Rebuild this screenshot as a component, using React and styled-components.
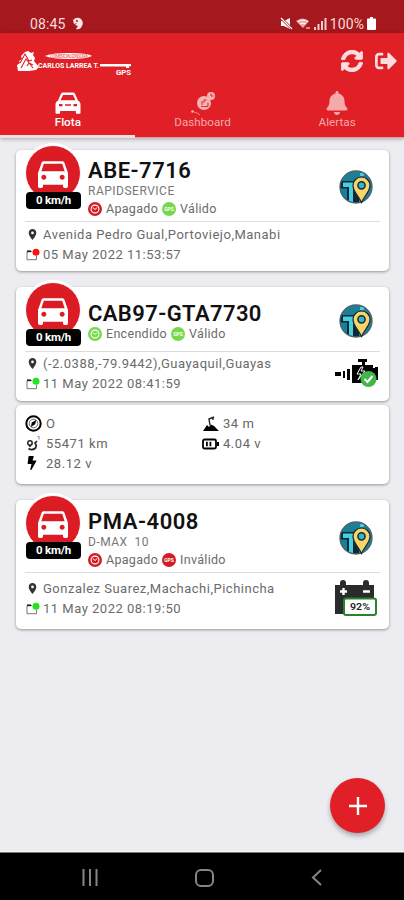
import React from "react";
import styled, { createGlobalStyle } from "styled-components";
import { MdDirectionsCar, MdLocationOn } from "react-icons/md";
import { FaSyncAlt, FaSignOutAlt, FaBell, FaBolt } from "react-icons/fa";

const GlobalStyle = createGlobalStyle`
  * {
    box-sizing: border-box;
  }
  body {
    margin: 0;
    background: #ededf1;
    font-family: Roboto, "Noto Sans", sans-serif;
  }
  svg {
    display: block;
    flex: none;
  }
`;

const Screen = styled.div`
  width: 404px;
  height: 900px;
  display: flex;
  flex-direction: column;
  overflow: hidden;
  background: #ededf1;
`;

const StatusBar = styled.div`
  flex: none;
  height: 33px;
  padding: 14px 28px 0 30px;
  display: flex;
  justify-content: space-between;
  background: #a5181d;
  color: #f9dcdc;
  font-size: 14px;
  line-height: 20px;
`;

const StatusGroup = styled.div`
  display: flex;
  align-items: center;
  gap: ${(props) => props.$gap}px;
  letter-spacing: 0.1px;
`;

const Header = styled.header`
  flex: none;
  height: 105px;
  display: flex;
  flex-direction: column;
  background: #e01f26;
  box-shadow: 0 1px 4px rgba(0, 0, 0, 0.3);
`;

const Toolbar = styled.div`
  height: 55px;
  padding: 0 7px 0 15px;
  display: flex;
  align-items: center;
  justify-content: space-between;
`;

const Actions = styled.div`
  display: flex;
  align-items: center;
  gap: 12px;
  color: #fcdcdc;
`;

const Tabs = styled.nav`
  flex: 1;
  display: grid;
  grid-template-columns: repeat(3, 1fr);
`;

const Tab = styled.div`
  display: flex;
  flex-direction: column;
  align-items: center;
  padding: 2px 0 0 1px;
  color: ${(props) => (props.$active ? "#fff" : "#f5a9ab")};
  border-bottom: ${(props) => (props.$active ? "3px solid #f3dede" : "1px solid #e99da0")};
  font-size: 11.7px;
  font-weight: ${(props) => (props.$active ? 500 : 400)};
  line-height: 13px;
`;

const TabIcon = styled.div`
  height: 26px;
  display: flex;
  align-items: center;
`;

const List = styled.main`
  flex: 1;
  padding: 12px 15px 0 16px;
  display: flex;
  flex-direction: column;
`;

const Card = styled.section`
  height: ${(props) => props.$height}px;
  margin-bottom: ${(props) => props.$gap}px;
  border-radius: 5px;
  background: #fff;
  box-shadow: 0 1px 3px rgba(0, 0, 0, 0.38);
`;

const Summary = styled.div`
  height: ${(props) => props.$height}px;
  margin: 0 9px;
  border-bottom: 1px solid #dcdcdc;
  display: grid;
  grid-template-columns: 55px 1fr 42px;
  column-gap: 8px;
`;

const Avatar = styled.div`
  display: flex;
  flex-direction: column;
  align-items: center;
  margin-top: -5px;
`;

const AvatarCircle = styled.div`
  flex: none;
  width: 56px;
  height: 56px;
  display: flex;
  align-items: center;
  justify-content: center;
  border-radius: 50%;
  background: #dc1c24;
  border: 1px solid #fff;
  box-shadow: 0 0 0 2px #fff;
  color: #fff;
`;

const Speed = styled.div`
  flex: none;
  width: 55px;
  height: 17px;
  margin: -9px 0 0 2px;
  border-radius: 4px;
  background: #000;
  color: #fff;
  font-size: 11.5px;
  font-weight: 700;
  letter-spacing: -0.2px;
  line-height: 17px;
  text-align: center;
  z-index: 1;
`;

const Identity = styled.div`
  padding-top: ${(props) => props.$top}px;
  white-space: nowrap;
`;

const Plate = styled.h2`
  margin: 0;
  height: 23px;
  font-size: 22px;
  font-weight: 600;
  line-height: 24px;
  letter-spacing: ${(props) => props.$spacing}px;
  color: #111;
`;

const Alias = styled.div`
  height: 18px;
  padding-top: 1px;
  font-size: 12px;
  line-height: 17px;
  letter-spacing: 0.5px;
  color: #777;
  white-space: pre;
`;

const States = styled.div`
  display: flex;
  align-items: center;
  gap: 4px;
  height: 17px;
  font-size: 12.5px;
  letter-spacing: 0.3px;
  color: #6b6b6b;
`;

const MapButton = styled.div`
  padding: ${(props) => props.$top}px 0 0 1px;
`;

const Details = styled.div`
  margin: 0 10px;
  display: flex;
  justify-content: space-between;
`;

const Lines = styled.div`
  padding-top: ${(props) => props.$top}px;
`;

const Line = styled.div`
  height: 20.5px;
  display: grid;
  grid-template-columns: 17px auto;
  align-items: center;
  font-size: 13px;
  letter-spacing: 0.5px;
  white-space: nowrap;
  color: #6b6b6b;
`;

const Extra = styled.div`
  padding-top: ${(props) => props.$top}px;
`;

const Sensors = styled(Card)`
  padding: 9px 9px 0;
  display: grid;
  grid-template-columns: 177px 1fr;
  grid-auto-rows: 19.7px;
`;

const Sensor = styled.div`
  display: grid;
  grid-template-columns: 18px auto;
  column-gap: 3px;
  justify-content: start;
  align-items: center;
  font-size: 13px;
  letter-spacing: 0.55px;
  color: #666;
`;

const AddButton = styled.button`
  position: absolute;
  left: 330px;
  top: 778px;
  width: 55px;
  height: 55px;
  padding: 0;
  display: flex;
  align-items: center;
  justify-content: center;
  border: none;
  border-radius: 50%;
  background: #e01f26;
  box-shadow: 0 3px 5px rgba(0, 0, 0, 0.3);
`;

const NavBar = styled.footer`
  flex: none;
  height: 48px;
  padding: 2px 81px 0 80px;
  border-top: 1px solid #777;
  box-shadow: 0 -1px 0 #fafafa;
  display: flex;
  align-items: center;
  justify-content: space-between;
  background: #000;
`;

const Logo = () => (
  <svg width="120" height="34" viewBox="0 0 120 34" fill="#fff">
    <path d="M3 27 2 21l3-2-1-2 3-2-1-3 4-4 3-1 3 2 3-1-1 3 2 3-1 3 5 6-3 3-7 1Z" />
    <g fill="none" stroke="#e01f26" strokeWidth="1.100">
      <path d="m5 19 5-9 4 7 3-1M6 24l5-9 7 9M12 22l2-3 4 2" />
    </g>
    <path d="M30 12q5-3 24-3t23 3q-5 3-23 3t-24-3Z" />
    <text x="35" y="13.800" fontSize="5" fontWeight="700" fill="#e88" textLength="38">
      COMERCIALIZADORA
    </text>
    <text x="23" y="23.500" fontSize="7.4" fontWeight="700" textLength="61" lengthAdjust="spacingAndGlyphs">
      CARLOS LARREA T.
    </text>
    <path d="M85 20h31v2.200h-2v1.800h-3v-1.500H85Z" />
    <text x="101" y="31" fontSize="7" fontWeight="700" textLength="15" lengthAdjust="spacingAndGlyphs">
      GPS
    </text>
  </svg>
);

const FrontCar = () => (
  <svg width="26" height="22" viewBox="0 0 26 22">
    <path
      fill="#fff"
      fillRule="evenodd"
      d="M6 1.800Q6.600.5 8 .5h10q1.400 0 2 1.300L23 8.500q2.500 1 2.500 3.500v9q0 .8-.8.8h-3q-.8 0-.8-.8v-2H5.100v2q0 .8-.8.8h-3q-.8 0-.8-.8v-9Q.5 9.500 3 8.500ZM8 3 5.500 8.300h15L18 3ZM4 12v2.200h3.500V12Zm14.500 0v2.200H22V12ZM10 12.200v1.500h6v-1.500Z"
    />
  </svg>
);

const DashboardGlyph = () => (
  <svg width="26" height="26" viewBox="0 0 26 26">
    <circle cx="15" cy="13" r="7" fill="#f5b4b5" />
    <circle cx="22" cy="6" r="4" fill="#f5b4b5" />
    <g stroke="#e01f26" fill="none">
      <path d="M22 3.500V6h2.500M12 16.500h2.500M13 15v-4M15 13v-3h2.500M15 16.500h4v-4" />
    </g>
    <circle cx="3.500" cy="21.500" r="1.300" fill="#f5b4b5" />
    <path d="m5 22 3 1 3 2" stroke="#ee8587" fill="none" />
  </svg>
);

const MapPin = () => (
  <svg width="34" height="34" viewBox="0 0 34 34">
    <defs>
      <clipPath id="disc">
        <circle cx="17" cy="17" r="16" />
      </clipPath>
    </defs>
    <g clipPath="url(#disc)">
      <path fill="#1b7f96" d="M0 0h34v34H0z" />
      <path fill="#102735" d="M0 11h16v23H0zM13 15h7v19h-7z" />
      <path fill="#44d0df" d="M4 12.500h10V33h-4V17H4zM21 3h4v3h-4z" />
      <path fill="#138199" d="M1 18.500h7V33H1z" />
    </g>
    <circle cx="17" cy="17" r="16" fill="none" stroke="#51616b" strokeWidth="1.300" />
    <path
      d="M22.500 32.500C19.500 25.500 14 21.500 14 15.500a8.500 8.500 0 0 1 17 0C31 21.500 25.500 25.500 22.500 32.500Z"
      fill="#fad469"
      stroke="#122b37"
      strokeWidth="1.200"
    />
    <circle cx="22.500" cy="15.300" r="3.600" fill="#35b7ca" stroke="#122b37" strokeWidth="1.500" />
  </svg>
);

const PowerBadge = ({ color }) => (
  <svg width="14" height="14" viewBox="0 0 14 14">
    <circle cx="7" cy="7" r="7" fill={color} />
    <circle cx="7" cy="7" r="3.900" fill="none" stroke="#fff" strokeWidth="1.100" />
    <path d="M4.800 5.500 7 7.500l2.200-2" fill="none" stroke="#fff" />
  </svg>
);

const GpsBadge = ({ color }) => (
  <svg width="14" height="14" viewBox="0 0 14 14">
    <circle cx="7" cy="7" r="7" fill={color} />
    <text x="7" y="9" fontSize="5" fontWeight="700" fill="#fff" textAnchor="middle" letterSpacing="0">
      GPS
    </text>
  </svg>
);

const CalendarDot = ({ color }) => (
  <svg width="14" height="14" viewBox="0 0 14 14">
    <path d="M6 3.500H1v8.200h9.500V8" fill="none" stroke="#777" />
    <path d="M1 3.300h4" stroke="#222" strokeWidth="1.800" />
    <circle cx="10" cy="4.200" r="3.500" fill={color} />
  </svg>
);

const Engine = () => (
  <svg width="44" height="28" viewBox="0 0 44 28">
    <path d="M0 13h6v4H0zM8 12h2v7H8zM12 10h3v11h-3zM17 6h10V3h-4V0h9v3h-2v3h8v3h2V8h3v13h-4l-4 3H17z" />
    <path d="m26 8-4 7h4l-3 6 7-9h-4l2-4Z" fill="none" stroke="#fff" />
    <circle cx="33.500" cy="20" r="8" fill="#42b649" />
    <path d="m29.500 20 3 3 5-6" fill="none" stroke="#fff" strokeWidth="2" />
  </svg>
);

const CarBattery = () => (
  <svg width="44" height="37" viewBox="0 0 44 37">
    <path d="M0 5h5V3q0-3 3-3t3 3v2h17V3q0-3 3-3t3 3v2h5v29H0Z" fill="#292b2d" />
    <path d="M5 11.500h7M8.500 8v7M28 11.500h7" stroke="#fff" strokeWidth="2.400" />
    <rect x="9" y="18.500" width="32" height="16.500" rx="2" fill="#fff" stroke="#25852a" strokeWidth="2" />
    <text
      x="15"
      y="30"
      fontSize="9"
      fontWeight="600"
      fill="#222"
      textLength="20"
      lengthAdjust="spacingAndGlyphs"
    >
      92%
    </text>
  </svg>
);

const GaugeIcon = () => (
  <svg width="17" height="17" viewBox="0 0 17 17">
    <circle cx="8.500" cy="8.500" r="7.200" fill="none" stroke="#000" strokeWidth="2" />
    <circle cx="8.500" cy="8.500" r="4.300" fill="none" stroke="#444" strokeWidth=".8" />
    <path d="m11.300 5-4.600 2.500-.8 4.500 4.300-2.700Z" />
  </svg>
);

const OdometerIcon = () => (
  <svg width="17" height="17" viewBox="0 0 17 17" fill="none" stroke="#222">
    <circle cx="5" cy="8" r="2.200" strokeWidth="1.500" />
    <path d="M5 10v2m-1.500 1.500Q7 16 10.500 13q1.500-3-.5-5l2-2" strokeWidth="1.700" />
    <path d="M12.500 1.500h1.500v3" strokeWidth=".9" stroke="#777" />
  </svg>
);

const AltitudeIcon = () => (
  <svg width="17" height="17" viewBox="0 0 17 17">
    <path d="m1 16 4-6 2 2 2-2.500 3 1.500 5 5Z" />
    <path d="M8 10.500 7 4l5-2M11 2.500v2.500" stroke="#222" fill="none" strokeWidth="1.400" />
  </svg>
);

const CellIcon = () => (
  <svg width="17" height="12" viewBox="0 0 17 12">
    <rect x="1" y="1.500" width="13" height="9" rx="1.500" fill="none" stroke="#000" strokeWidth="1.800" />
    <path d="M15 4h2v4h-2zM4 3.800h1.800v4.500H4zM7.500 3.800h1.800v4.500H7.500z" />
  </svg>
);

const vehicles = [
  {
    plate: "ABE-7716",
    spacing: 0.5,
    alias: "RAPIDSERVICE",
    engineOn: false,
    gpsOk: true,
    address: "Avenida Pedro Gual,Portoviejo,Manabi",
    date: "05 May 2022 11:53:57",
    dot: "#f81414",
    layout: { height: 121, gap: 16, summary: 72, title: 9, map: 20, lines: 2 },
  },
  {
    plate: "CAB97-GTA7730",
    spacing: 0.4,
    engineOn: true,
    gpsOk: true,
    address: "(-2.0388,-79.9442),Guayaquil,Guayas",
    date: "11 May 2022 08:41:59",
    dot: "#20e51b",
    extra: <Engine />,
    extraTop: 7,
    layout: { height: 114, gap: 4, summary: 65, title: 15, map: 17, lines: 1 },
    sensors: true,
  },
  {
    plate: "PMA-4008",
    spacing: 0.55,
    alias: "D-MAX  10",
    engineOn: false,
    gpsOk: false,
    address: "Gonzalez Suarez,Machachi,Pichincha",
    date: "11 May 2022 08:19:50",
    dot: "#20e51b",
    extra: <CarBattery />,
    extraTop: 7,
    layout: { height: 129, gap: 0, summary: 73, title: 10, map: 21, lines: 5 },
  },
];

const GREEN = "#78d84b";
const RED = "#d31c25";

const VehicleCard = ({ vehicle }) => {
  const { layout } = vehicle;
  return (
    <Card $height={layout.height} $gap={layout.gap}>
      <Summary $height={layout.summary}>
        <Avatar>
          <AvatarCircle>
            <MdDirectionsCar size={40} />
          </AvatarCircle>
          <Speed>0 km/h</Speed>
        </Avatar>
        <Identity $top={layout.title}>
          <Plate $spacing={vehicle.spacing}>{vehicle.plate}</Plate>
          {vehicle.alias ? <Alias>{vehicle.alias}</Alias> : null}
          <States>
            <PowerBadge color={vehicle.engineOn ? GREEN : RED} />
            <span>{vehicle.engineOn ? "Encendido" : "Apagado"}</span>
            <GpsBadge color={vehicle.gpsOk ? GREEN : RED} />
            <span>{vehicle.gpsOk ? "Válido" : "Inválido"}</span>
          </States>
        </Identity>
        <MapButton $top={layout.map}>
          <MapPin />
        </MapButton>
      </Summary>
      <Details>
        <Lines $top={layout.lines}>
          <Line>
            <MdLocationOn size={13} color="#333" />
            {vehicle.address}
          </Line>
          <Line>
            <CalendarDot color={vehicle.dot} />
            {vehicle.date}
          </Line>
        </Lines>
        {vehicle.extra ? <Extra $top={vehicle.extraTop}>{vehicle.extra}</Extra> : null}
      </Details>
    </Card>
  );
};

const App = () => (
  <Screen>
    <GlobalStyle />
    <StatusBar>
      <StatusGroup $gap={7}>
        <span>08:45</span>
        <svg width="11" height="13" viewBox="0 0 11 13" fill="#fbe6e6">
          <path d="M1 3Q5-1 9 2q3 3 1 7-2 4-6 3l2-3-3-1 2-2-3 1Z" />
          <circle cx="5" cy="4" r="1" fill="#a5181d" />
        </svg>
      </StatusGroup>
      <StatusGroup $gap={3}>
        <svg width="13" height="13" viewBox="0 0 13 13" fill="#fff">
          <path d="M1 4h3l6-3v11L4 9H1Z" />
          <path d="m1 1 11 11" stroke="#a5181d" strokeWidth="2.500" />
          <path d="m1 1 11 11" stroke="#fff" strokeWidth="1.200" />
        </svg>
        <svg width="15" height="13" viewBox="0 0 15 13">
          <path d="M0 4q6.500-5 13 0L7 11Z" fill="#e9a9aa" />
          <path d="M2 5q5-4 10 0M4 7q3-2 6 0" fill="none" stroke="#fff" />
          <path d="M10 11h4" stroke="#e9a9aa" strokeWidth="1.500" />
        </svg>
        <svg width="13" height="12" viewBox="0 0 13 12" fill="#f3cccc">
          <path d="M0 9h2v3H0zM3.500 6h2v6h-2zM7 3h2v9H7zM10.500 0h2v12h-2z" />
        </svg>
        <span>100%</span>
        <svg width="9" height="13" viewBox="0 0 9 13" fill="#fff">
          <path d="M3 0h3v1.500h2q1 0 1 1V12q0 1-1 1H1q-1 0-1-1V2.500q0-1 1-1h2Z" />
        </svg>
      </StatusGroup>
    </StatusBar>
    <Header>
      <Toolbar>
        <Logo />
        <Actions>
          <FaSyncAlt size={22} stroke="#fcdcdc" strokeWidth={22} />
          <FaSignOutAlt size={22} />
        </Actions>
      </Toolbar>
      <Tabs>
        <Tab $active>
          <TabIcon>
            <FrontCar />
          </TabIcon>
          Flota
        </Tab>
        <Tab>
          <TabIcon>
            <DashboardGlyph />
          </TabIcon>
          Dashboard
        </Tab>
        <Tab>
          <TabIcon>
            <FaBell size={24} />
          </TabIcon>
          Alertas
        </Tab>
      </Tabs>
    </Header>
    <List>
      {vehicles.map((vehicle) => (
        <React.Fragment key={vehicle.plate}>
          <VehicleCard vehicle={vehicle} />
          {vehicle.sensors ? (
            <Sensors $height={79} $gap={16}>
              <Sensor>
                <GaugeIcon />O
              </Sensor>
              <Sensor>
                <AltitudeIcon />
                34 m
              </Sensor>
              <Sensor>
                <OdometerIcon />
                55471 km
              </Sensor>
              <Sensor>
                <CellIcon />
                4.04 v
              </Sensor>
              <Sensor>
                <FaBolt size={14} color="#000" />
                28.12 v
              </Sensor>
            </Sensors>
          ) : null}
        </React.Fragment>
      ))}
    </List>
    <AddButton>
      <svg width="18" height="18" viewBox="0 0 18 18">
        <path d="M9 0v18M0 9h18" stroke="#fff" strokeWidth="2.400" />
      </svg>
    </AddButton>
    <NavBar>
      <svg width="18" height="17" viewBox="0 0 18 17">
        <path d="M3.500 0v17M10 0v17M16.500 0v17" stroke="#858585" strokeWidth="2" />
      </svg>
      <svg width="19" height="18" viewBox="0 0 19 18">
        <rect x="1" y="1" width="17" height="16" rx="5" fill="none" stroke="#858585" strokeWidth="2" />
      </svg>
      <svg width="12" height="17" viewBox="0 0 12 17">
        <path d="m10 1-8 7.500 8 7.500" fill="none" stroke="#858585" strokeWidth="2" />
      </svg>
    </NavBar>
  </Screen>
);

export default App;
